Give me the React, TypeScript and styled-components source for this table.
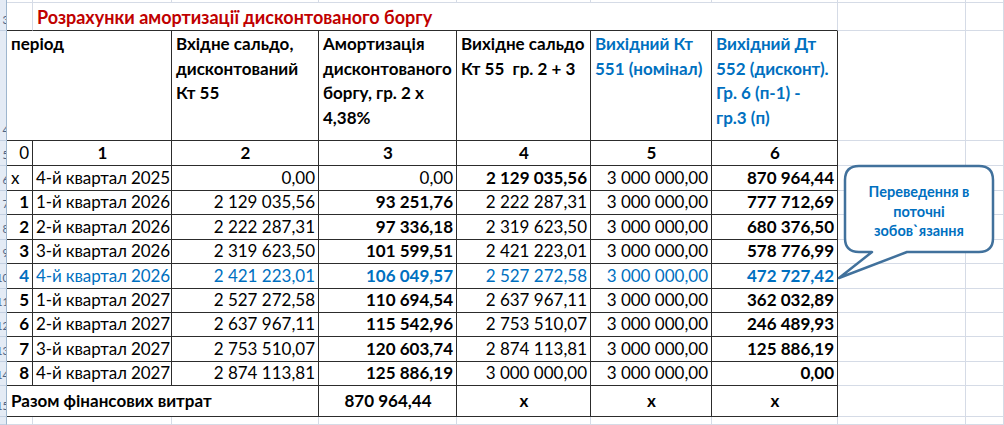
import React from "react";
import styled, { createGlobalStyle } from "styled-components";

const GRID = "#d5dbe6";
const INK = "#2c2c2c";
const BLUE = "#0070c0";
const RED = "#c00000";

const GlobalStyle = createGlobalStyle`
  html, body {
    margin: 0;
    padding: 0;
    background: #ffffff;
  }
  body {
    font-family: Lato, "Open Sans", sans-serif;
    color: #000;
  }
`;

type Align = "left" | "right" | "center";

type CellProps = {
  $span?: number;
  $align?: Align;
  $bold?: boolean;
  $blue?: boolean;
  $right?: string;
  $bottom?: string;
};

const justify = (a?: Align) =>
  a === "right" ? "flex-end" : a === "center" ? "center" : "flex-start";

const Sheet = styled.div`
  position: relative;
  width: 1004px;
  height: 425px;
  overflow: hidden;
  display: grid;
  grid-template-columns: 7px 26px 139px 147px 138px 134px 121px 126px 128px 1fr;
  grid-template-rows: 3px 28px 110px 25px 25px repeat(8, 24.4px) 31px 1fr;
  font-size: 17px;
`;

const Cell = styled.div<CellProps>`
  grid-column: span ${(p) => p.$span ?? 1};
  box-sizing: border-box;
  min-width: 0;
  display: flex;
  justify-content: ${(p) => justify(p.$align)};
  align-items: flex-end;
  padding: 0 3px 2px 4px;
  border-right: 1px solid ${(p) => p.$right ?? GRID};
  border-bottom: 1px solid ${(p) => p.$bottom ?? GRID};
  font-weight: ${(p) => (p.$bold ? 700 : 400)};
  color: ${(p) => (p.$blue ? BLUE : "#000")};
  line-height: 20px;
  white-space: nowrap;
  overflow: hidden;
`;

const PeriodCell = styled(Cell)`
  padding-left: 3px;
  padding-right: 1px;
  letter-spacing: -0.12px;
`;

const HeadCell = styled(Cell)`
  align-items: flex-start;
  padding-top: 1px;
  line-height: 24.5px;
  white-space: pre;
`;

const TitleCell = styled(Cell)`
  overflow: visible;
  padding-bottom: 3px;
  font-size: 18px;
  color: ${RED};
`;

const TotalCell = styled(Cell)`
  padding-bottom: 5px;
`;

const RowHead = styled.div`
  box-sizing: border-box;
  display: flex;
  justify-content: flex-end;
  align-items: flex-end;
  overflow: hidden;
  background: #e4ebf5;
  border-right: 1px solid #9eb6ce;
  border-bottom: 1px solid #c3d0e2;
  padding-bottom: 4px;
  font-size: 11px;
  line-height: 12px;
  color: #4d6383;
`;

const RowNum = styled.span`
  margin-right: -3px;
`;

const Callout = styled.div`
  position: absolute;
  left: 835px;
  top: 160px;
  width: 165px;
  height: 125px;
`;

const Bubble = styled.svg`
  position: absolute;
  inset: 0;
`;

const CalloutText = styled.div`
  position: absolute;
  left: 10px;
  top: 6px;
  width: 148px;
  height: 86px;
  box-sizing: border-box;
  padding-top: 5px;
  display: flex;
  flex-direction: column;
  justify-content: center;
  align-items: center;
  text-align: center;
  font-size: 14.5px;
  line-height: 19.5px;
  font-weight: 700;
  color: ${BLUE};
`;

type DataRow = {
  no: string;
  period: string;
  opening: string;
  amort: string;
  closing: string;
  nominal: string;
  discount: string;
  numBold?: boolean;
  amortBold?: boolean;
  closingBold?: boolean;
  blue?: boolean;
};

const rows: DataRow[] = [
  { no: "x", period: "4-й квартал 2025", opening: "0,00", amort: "0,00", closing: "2 129 035,56", nominal: "3 000 000,00", discount: "870 964,44", numBold: false, amortBold: false, closingBold: true },
  { no: "1", period: "1-й квартал 2026", opening: "2 129 035,56", amort: "93 251,76", closing: "2 222 287,31", nominal: "3 000 000,00", discount: "777 712,69" },
  { no: "2", period: "2-й квартал 2026", opening: "2 222 287,31", amort: "97 336,18", closing: "2 319 623,50", nominal: "3 000 000,00", discount: "680 376,50" },
  { no: "3", period: "3-й квартал 2026", opening: "2 319 623,50", amort: "101 599,51", closing: "2 421 223,01", nominal: "3 000 000,00", discount: "578 776,99" },
  { no: "4", period: "4-й квартал 2026", opening: "2 421 223,01", amort: "106 049,57", closing: "2 527 272,58", nominal: "3 000 000,00", discount: "472 727,42", blue: true },
  { no: "5", period: "1-й квартал 2027", opening: "2 527 272,58", amort: "110 694,54", closing: "2 637 967,11", nominal: "3 000 000,00", discount: "362 032,89" },
  { no: "6", period: "2-й квартал 2027", opening: "2 637 967,11", amort: "115 542,96", closing: "2 753 510,07", nominal: "3 000 000,00", discount: "246 489,93" },
  { no: "7", period: "3-й квартал 2027", opening: "2 753 510,07", amort: "120 603,74", closing: "2 874 113,81", nominal: "3 000 000,00", discount: "125 886,19" },
  { no: "8", period: "4-й квартал 2027", opening: "2 874 113,81", amort: "125 886,19", closing: "3 000 000,00", nominal: "3 000 000,00", discount: "0,00" },
];

const headers: { text: string; blue?: boolean }[] = [
  { text: "Вхідне сальдо,\nдисконтований\nКт 55" },
  { text: "Амортизація\nдисконтованого\nборгу, гр. 2 х\n4,38%" },
  { text: "Вихідне сальдо\nКт 55  гр. 2 + 3" },
  { text: "Вихідний Кт\n551 (номінал)", blue: true },
  { text: "Вихідний Дт\n552 (дисконт).\nГр. 6 (п-1) -\nгр.3 (п)", blue: true },
];

const Spare = () => (
  <>
    <Cell />
    <Cell />
  </>
);

const Head = ({ n }: { n?: number }) => (
  <RowHead>{n !== undefined && <RowNum>{n}</RowNum>}</RowHead>
);

export default function App() {
  return (
    <>
      <GlobalStyle />
      <Sheet>
        <Head />
        {Array.from({ length: 9 }).map((_, i) => (
          <Cell key={i} />
        ))}

        <Head n={3} />
        <Cell $bottom={INK} />
        <TitleCell $span={6} $bold $bottom={INK}>
          Розрахунки амортизації дисконтованого боргу
        </TitleCell>
        <Spare />

        <Head n={4} />
        <HeadCell $span={2} $bold $right={INK} $bottom={INK}>
          період
        </HeadCell>
        {headers.map((h) => (
          <HeadCell key={h.text} $bold $blue={h.blue} $right={INK} $bottom={INK}>
            {h.text}
          </HeadCell>
        ))}
        <Spare />

        <Head n={5} />
        <Cell $align="right" $right={INK} $bottom={INK}>
          0
        </Cell>
        {["1", "2", "3", "4", "5", "6"].map((n) => (
          <Cell key={n} $align="center" $bold $right={INK} $bottom={INK}>
            {n}
          </Cell>
        ))}
        <Spare />

        {rows.map((r, i) => (
          <React.Fragment key={r.period}>
            <Head n={6 + i} />
            <Cell
              $align={r.no === "x" ? "left" : "right"}
              $bold={r.numBold ?? true}
              $blue={r.blue}
              $right={INK}
              $bottom={INK}
            >
              {r.no}
            </Cell>
            <PeriodCell $blue={r.blue} $right={INK} $bottom={INK}>
              {r.period}
            </PeriodCell>
            <Cell $align="right" $blue={r.blue} $right={INK} $bottom={INK}>
              {r.opening}
            </Cell>
            <Cell $align="right" $bold={r.amortBold ?? true} $blue={r.blue} $right={INK} $bottom={INK}>
              {r.amort}
            </Cell>
            <Cell $align="right" $bold={r.closingBold} $blue={r.blue} $right={INK} $bottom={INK}>
              {r.closing}
            </Cell>
            <Cell $align="right" $blue={r.blue} $right={INK} $bottom={INK}>
              {r.nominal}
            </Cell>
            <Cell $align="right" $bold $blue={r.blue} $right={INK} $bottom={INK}>
              {r.discount}
            </Cell>
            <Spare />
          </React.Fragment>
        ))}

        <Head n={15} />
        <TotalCell $span={3} $bold $right={INK} $bottom={INK}>
          Разом фінансових витрат
        </TotalCell>
        <TotalCell $align="center" $bold $right={INK} $bottom={INK}>
          870 964,44
        </TotalCell>
        {["a", "b", "c"].map((k) => (
          <TotalCell key={k} $align="center" $bold $right={INK} $bottom={INK}>
            x
          </TotalCell>
        ))}
        <Spare />

        <Head />
        {Array.from({ length: 9 }).map((_, i) => (
          <Cell key={i} />
        ))}

        <Callout>
          <Bubble width="165" height="125" viewBox="0 0 165 125">
            <path
              d="M 24 6 H 144 Q 158 6 158 20 V 78 Q 158 92 144 92 H 72 L 4 118 L 37 92 H 24 Q 10 92 10 78 V 20 Q 10 6 24 6 Z"
              fill="#ffffff"
              stroke="#41719c"
              strokeWidth="2.5"
              strokeLinejoin="round"
            />
          </Bubble>
          <CalloutText>
            <span>Переведення в</span>
            <span>поточні</span>
            <span>зобов`язання</span>
          </CalloutText>
        </Callout>
      </Sheet>
    </>
  );
}
